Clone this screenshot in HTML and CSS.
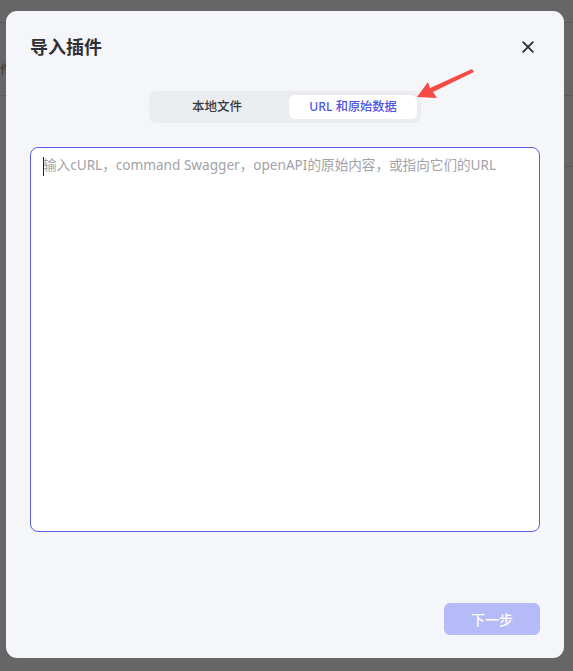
FILE: index.html
```html
<!DOCTYPE html>
<html lang="zh">
<head>
<meta charset="utf-8">
<title>导入插件</title>
<link rel="stylesheet" href="styles.css">
</head>
<body>
<div class="page">
  <div class="bg-line bg-line-1"></div>
  <div class="bg-char">件</div>
  <div class="bg-line bg-line-2"></div>
  <div class="bg-line bg-line-3"></div>
</div>
<div class="overlay"></div>
<div class="modal">
  <div class="modal-header">
    <h1 class="modal-title">导入插件</h1>
    <button class="close-btn" aria-label="关闭">
      <svg width="12" height="12" viewBox="0 0 12 12"><path d="M1.2 1.2 L10.8 10.8 M10.8 1.2 L1.2 10.8" stroke="#2f3035" stroke-width="1.9" stroke-linecap="round" fill="none"/></svg>
    </button>
  </div>
  <div class="tabs-wrap">
    <div class="tabs">
      <div class="tab">本地文件</div>
      <div class="tab tab-active">URL 和原始数据</div>
    </div>
  </div>
  <div class="editor">
    <span class="caret"></span><span class="placeholder">输入cURL，command Swagger，openAPI的原始内容，或指向它们的URL</span>
  </div>
  <div class="footer">
    <button class="next-btn">下一步</button>
  </div>
  <svg class="arrow" width="70" height="40" viewBox="0 0 70 40">
    <polygon points="6,30 17,15 19,21 61,2 63,5 22,25 26,31" fill="#f44b45"/>
  </svg>
</div>
</body>
</html>
```

FILE: styles.css
```css
* { box-sizing: border-box; }
html, body { margin: 0; padding: 0; }
body {
  width: 573px;
  height: 671px;
  overflow: hidden;
  background: #666668;
  font-family: "Noto Sans", "Noto Sans CJK SC", sans-serif;
  position: relative;
}
.page {
  position: absolute;
  inset: 0;
  background: #fff;
}
.bg-line {
  position: absolute;
  left: 0;
  right: 0;
  height: 1px;
  background: #e4e4e8;
}
.bg-line-1 { top: 22px; }
.bg-line-2 { top: 95px; }
.bg-line-3 { top: 166px; left: 560px; }
.bg-char {
  position: absolute;
  left: 0;
  top: 62px;
  font-size: 12px;
  line-height: 16px;
  color: #888;
}
.overlay {
  position: absolute;
  inset: 0;
  background: rgba(0, 0, 0, 0.6);
}
.modal {
  position: absolute;
  left: 6px;
  top: 11px;
  width: 558px;
  height: 647px;
  background: #f5f6fa;
  border-radius: 11px;
  padding: 24px 24px 23px;
  display: flex;
  flex-direction: column;
}
.modal-header {
  height: 24px;
  display: flex;
  align-items: center;
  justify-content: space-between;
}
.modal-title {
  margin: 0;
  font-size: 18px;
  font-weight: 700;
  color: #2f3035;
  line-height: 24px;
}
.close-btn {
  border: 0;
  background: transparent;
  padding: 0;
  width: 12px;
  height: 12px;
  margin-right: 6px;
  display: flex;
  align-items: center;
  justify-content: center;
}
.tabs-wrap {
  margin-top: 32px;
  display: flex;
  justify-content: center;
}
.tabs {
  display: flex;
  gap: 8px;
  padding: 4px;
  background: #ebecf0;
  border-radius: 8px;
}
.tab {
  width: 128px;
  height: 24px;
  line-height: 24px;
  text-align: center;
  font-size: 12.5px;
  font-weight: 500;
  color: #3a3b40;
  border-radius: 6px;
}
.tab-active {
  background: #fff;
  color: #4f55e6;
  font-size: 12.2px;
}
.editor {
  margin-top: 24px;
  height: 385px;
  background: #fff;
  border: 1px solid #5a5fe6;
  border-radius: 8px;
  padding: 7px 12px;
  position: relative;
  font-size: 13.6px;
  line-height: 20px;
}
.caret {
  position: absolute;
  left: 12px;
  top: 9px;
  width: 1px;
  height: 19px;
  background: #222;
}
.placeholder {
  color: #a2a3a8;
}
.footer {
  margin-top: auto;
  display: flex;
  justify-content: flex-end;
}
.next-btn {
  width: 96px;
  height: 32px;
  border: 0;
  border-radius: 6px;
  background: #b4bbf6;
  color: #fff;
  font-family: "Noto Sans", "Noto Sans CJK SC", sans-serif;
  font-size: 14px;
  font-weight: 500;
}
.arrow {
  position: absolute;
  left: 405px;
  top: 56px;
}
```
